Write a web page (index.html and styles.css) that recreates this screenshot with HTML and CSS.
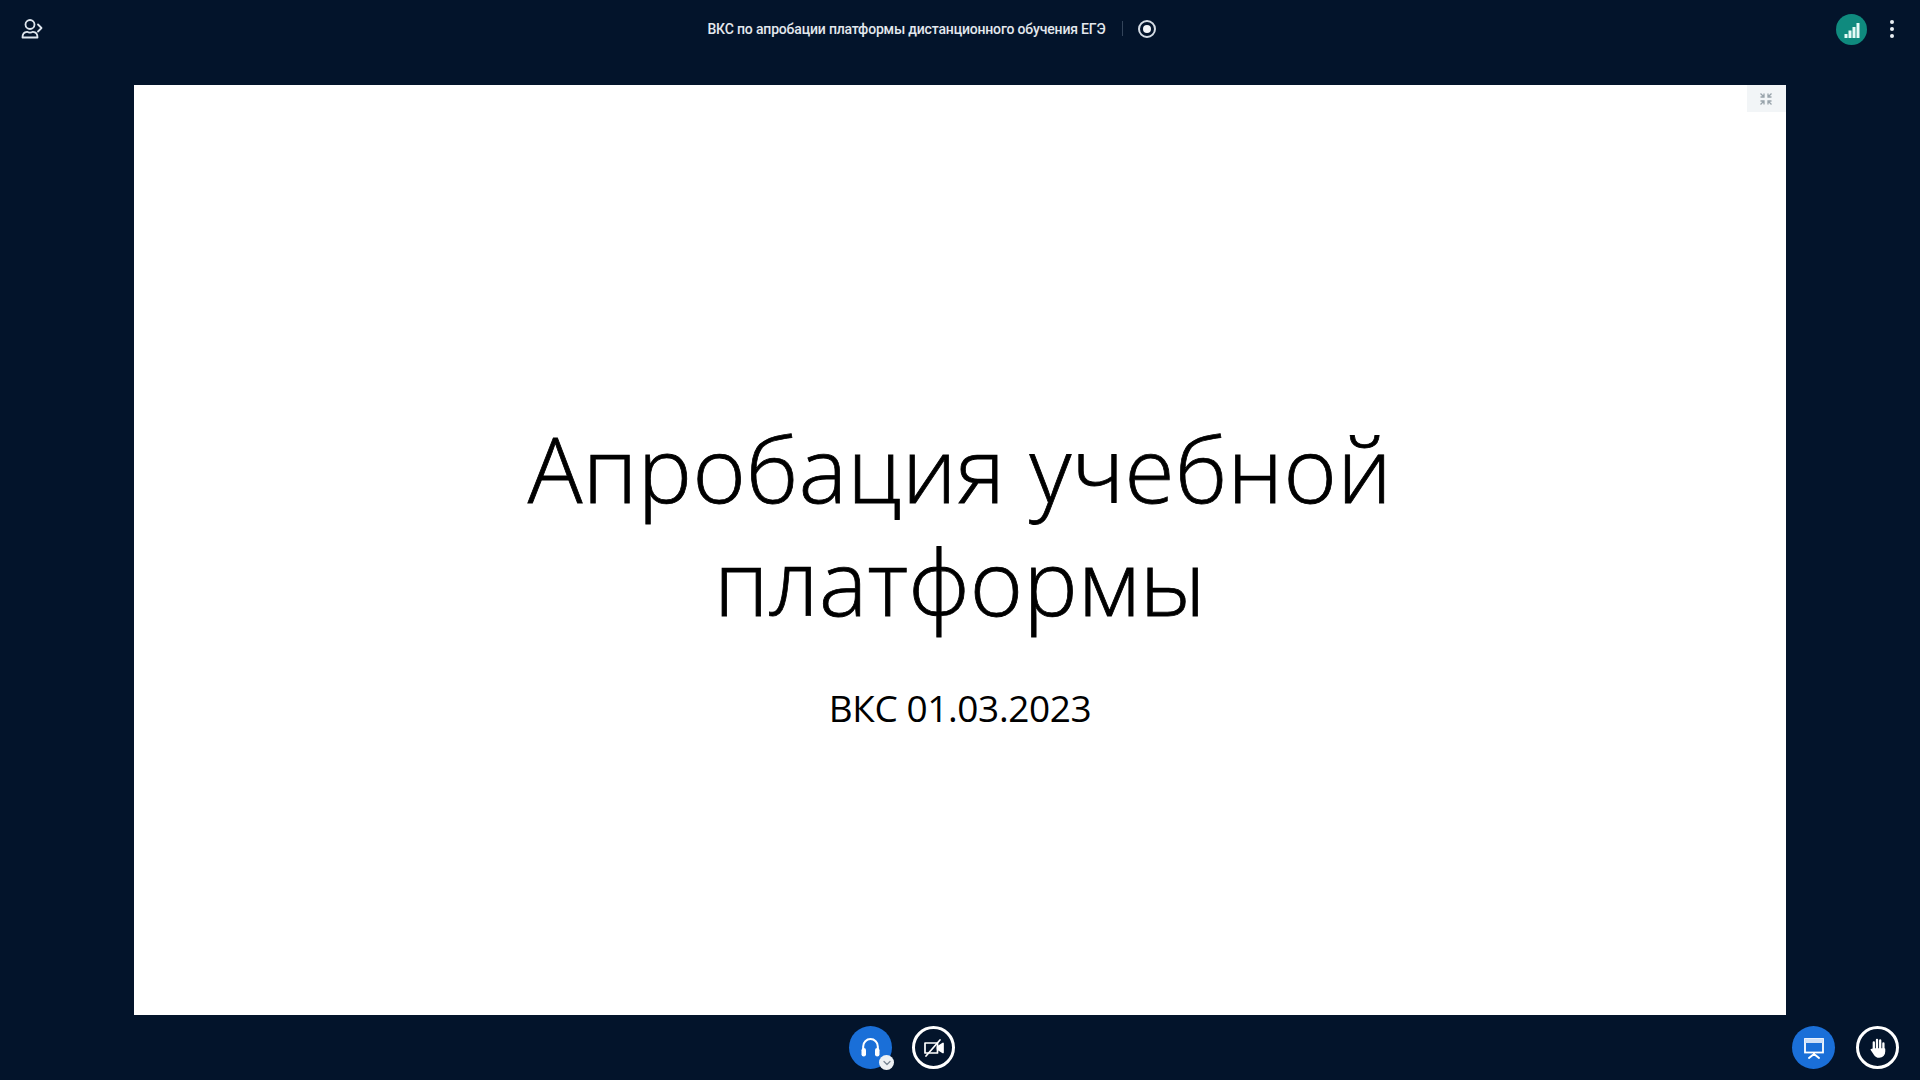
FILE: index.html
```html
<!DOCTYPE html>
<html lang="ru">

<head>
    <meta charset="UTF-8">
    <title>ВКС по апробации платформы дистанционного обучения ЕГЭ</title>
    <link rel="stylesheet" href="styles.css">
</head>

<body>
    <div class="app">
        <header class="top-bar">
            <div class="top-left">
                <svg class="users-icon" viewBox="0 0 24 24" width="24" height="24" fill="none" stroke="#dfe6ee" stroke-width="1.800" stroke-linecap="round" stroke-linejoin="round">
                    <circle cx="10" cy="7.500" r="4.500"></circle>
                    <path d="M2.500 20.500c0-3.400 2-5.500 4.500-5.700 1.800 1 4.200 1 6 0 2.500.2 4.500 2.300 4.500 5.700z"></path>
                    <path d="M18 7.500l3.500 3.500L18 14.500"></path>
                </svg>
            </div>

            <div class="top-center">
                <span class="meeting-title">ВКС по апробации платформы дистанционного обучения ЕГЭ</span>
                <span class="divider"></span>
                <span class="record-btn"><span class="record-dot"></span></span>
            </div>

            <div class="top-right">
                <span class="signal">
                    <svg viewBox="0 0 20 20" width="20" height="20" fill="#e6fbf7">
                        <rect x="2.500" y="14" width="3" height="4"></rect>
                        <rect x="6.500" y="10.500" width="3" height="7.500"></rect>
                        <rect x="10.500" y="7" width="3" height="11"></rect>
                        <rect x="14.500" y="3" width="3" height="15"></rect>
                    </svg>
                </span>
                <span class="more-btn"><i></i><i></i><i></i></span>
            </div>
        </header>

        <main class="stage">
            <section class="slide">
                <button class="fit-btn">
                    <svg viewBox="0 0 14 14" width="14" height="14" fill="none" stroke="#98a3ab" stroke-width="1.300">
                        <path d="M5 1.500v3.500H1.500M1.500 1.500L5 5M9 1.500v3.500h3.500M12.500 1.500L9 5M5 12.500V9H1.500M1.500 12.500L5 9M9 12.500V9h3.500M12.500 12.500L9 9"></path>
                    </svg>
                </button>
                <h1 class="slide-title">Апробация учебной<br>платформы</h1>
                <p class="slide-subtitle">ВКС 01.03.2023</p>
            </section>
        </main>

        <footer class="bottom-bar">
            <div class="bottom-center">
                <button class="round-btn round-btn-blue">
                    <svg viewBox="0 0 24 24" width="27" height="27" fill="none" stroke="#fff" stroke-width="1.800" stroke-linecap="round">
                        <path d="M5.500 14v-3a6.500 6.500 0 0 1 13 0v3"></path>
                        <rect x="4" y="12.500" width="4" height="7.500" rx="2" fill="#fff" stroke="none"></rect>
                        <rect x="16" y="12.500" width="4" height="7.500" rx="2" fill="#fff" stroke="none"></rect>
                    </svg>
                    <span class="audio-badge">
                        <svg viewBox="0 0 10 10" width="10" height="10" fill="none" stroke="#7a8794" stroke-width="1.300" stroke-linecap="round" stroke-linejoin="round">
                            <path d="M2 3.500l3 3 3-3"></path>
                        </svg>
                    </span>
                </button>
                <button class="round-btn">
                    <svg viewBox="0 0 24 24" width="24" height="24" fill="none" stroke="#fff" stroke-width="1.700" stroke-linejoin="round">
                        <path d="M15.500 7H3v10h12.500z"></path>
                        <path d="M15.500 11l5.500-3.500v9L15.500 13z" fill="#fff"></path>
                        <path d="M4 20L18 4" stroke-linecap="round"></path>
                    </svg>
                </button>
            </div>
            <div class="bottom-right">
                <button class="round-btn round-btn-blue">
                    <svg viewBox="0 0 24 24" width="24" height="24" fill="none" stroke="#fff" stroke-width="1.800" stroke-linecap="round">
                        <rect x="3" y="3" width="18" height="13.500"></rect>
                        <rect x="3" y="3" width="18" height="4" fill="#cfe0f7" stroke="none"></rect>
                        <path d="M12 17v2M12 18l-5 4M12 18l5 4" stroke-width="2"></path>
                    </svg>
                </button>
                <button class="round-btn">
                    <svg viewBox="0 0 24 24" width="24" height="24" fill="none" stroke="#fff" stroke-width="2.300" stroke-linecap="round" stroke-linejoin="round">
                        <path d="M7.800 6.500V14M11 4v9M14.200 4.500V13M17.400 7.500V14"></path>
                        <path d="M7 13h11.500v2.500c0 3.300-2.200 5.500-5.200 5.500-2.500 0-3.800-1-5-3l-3-4.500" fill="#fff" stroke-width="1.500"></path>
                    </svg>
                </button>
            </div>
        </footer>
    </div>
</body>

</html>
```

FILE: styles.css
```css
* {
    box-sizing: border-box;
}

body {
    margin: 0;
    background-color: #03142b;
    font-family: Roboto, "Liberation Sans", sans-serif;
}

.app {
    display: flex;
    flex-direction: column;
    width: 1920px;
    height: 1080px;
    overflow: hidden;
}

.top-bar {
    display: grid;
    grid-template-columns: 1fr auto 1fr;
    align-items: center;
    height: 85px;
    padding: 0 23px 28px 20px;
}

.top-left {
    display: flex;
}

.users-icon {
    display: block;
}

.top-center {
    display: flex;
    align-items: center;
    margin-right: 54px;
}

.meeting-title {
    font-size: 14px;
    font-weight: 500;
    letter-spacing: -0.17px;
    color: #e3e8ee;
    white-space: nowrap;
}

.divider {
    width: 1px;
    height: 15px;
    margin: 0 15px 0 16px;
    background-color: #33445a;
}

.record-btn {
    display: flex;
    align-items: center;
    justify-content: center;
    width: 18px;
    height: 18px;
    border: 2px solid #d5dce4;
    border-radius: 50%;
}

.record-dot {
    width: 8px;
    height: 8px;
    border-radius: 50%;
    background-color: #f3f5f8;
}

.top-right {
    display: flex;
    align-items: center;
    justify-content: flex-end;
    gap: 23px;
}

.signal {
    display: flex;
    align-items: center;
    justify-content: center;
    width: 31px;
    height: 31px;
    margin-top: 2px;
    border-radius: 50%;
    background-color: #0f8a7e;
}

.more-btn {
    display: flex;
    flex-direction: column;
    gap: 3px;
    width: 4px;
    margin-right: 3px;
}

.more-btn i {
    display: block;
    width: 4px;
    height: 4px;
    border-radius: 50%;
    background-color: #e9eef2;
}

.stage {
    display: flex;
    justify-content: center;
}

.slide {
    position: relative;
    display: flex;
    flex-direction: column;
    align-items: center;
    width: 1652px;
    height: 930px;
    padding-top: 327px;
    background-color: #fff;
    color: #000;
    font-family: "Open Sans", "Noto Sans", sans-serif;
}

.fit-btn {
    position: absolute;
    top: 0;
    right: 0;
    display: flex;
    align-items: center;
    justify-content: center;
    width: 39px;
    height: 27px;
    padding: 0 2px 0 0;
    border: none;
    background-color: #f2f5f7;
}

.slide-title {
    margin: 0;
    font-size: 91px;
    font-weight: 300;
    line-height: 113px;
    letter-spacing: 0.35px;
    -webkit-text-stroke: 0.8px #000;
    text-align: center;
}

.slide-subtitle {
    margin: 46px 0 0;
    font-size: 37px;
    font-weight: 400;
    line-height: 48px;
    letter-spacing: -0.4px;
}

.bottom-bar {
    position: relative;
    display: flex;
    align-items: center;
    justify-content: center;
    flex: 1;
}

.bottom-center {
    display: flex;
    gap: 20px;
    margin-right: 116px;
}

.bottom-right {
    position: absolute;
    top: 11px;
    right: 21px;
    display: flex;
    gap: 21px;
}

.round-btn {
    position: relative;
    display: flex;
    align-items: center;
    justify-content: center;
    width: 43px;
    height: 43px;
    padding: 0;
    border: 3px solid #fff;
    border-radius: 50%;
    background: none;
}

.round-btn-blue {
    border: none;
    background-color: #1a6fd8;
}

.audio-badge {
    position: absolute;
    right: -2px;
    bottom: -1px;
    display: flex;
    align-items: center;
    justify-content: center;
    width: 15px;
    height: 15px;
    border-radius: 50%;
    background-color: #eef1f4;
}
```
